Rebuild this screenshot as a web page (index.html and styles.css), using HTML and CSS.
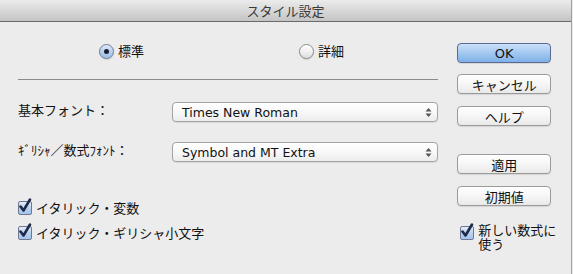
FILE: index.html
```html
<!DOCTYPE html>
<html lang="ja">
<head>
<meta charset="utf-8">
<title>スタイル設定</title>
<link rel="stylesheet" href="styles.css">
</head>
<body>
<div class="window">
  <div class="titlebar">スタイル設定</div>
  <div class="content">
    <div class="left">
      <div class="radios">
        <label class="radio-item r1"><span class="radio on"><span class="dot"></span></span>標準</label>
        <label class="radio-item r2"><span class="radio"></span>詳細</label>
      </div>
      <div class="sep"></div>
      <div class="row row1">
        <span class="label">基本フォント：</span>
        <div class="select"><span>Times New Roman</span>
          <svg class="arrows" width="7" height="11" viewBox="0 0 7 11"><path d="M3.5 1 L6.5 4.5 H0.5 Z M3.5 10 L6.5 6.5 H0.5 Z" fill="#555"/></svg>
        </div>
      </div>
      <div class="row row2">
        <span class="label">ｷﾞﾘｼｬ／数式ﾌｫﾝﾄ：</span>
        <div class="select"><span>Symbol and MT Extra</span>
          <svg class="arrows" width="7" height="11" viewBox="0 0 7 11"><path d="M3.5 1 L6.5 4.5 H0.5 Z M3.5 10 L6.5 6.5 H0.5 Z" fill="#555"/></svg>
        </div>
      </div>
      <label class="check c1"><span class="box"><svg width="18" height="18" viewBox="0 0 18 18"><path d="M3.5 8.5 L6.5 12.5 L13 1.5" fill="none" stroke="#1d2a4a" stroke-width="2.6" stroke-linecap="round" stroke-linejoin="round"/></svg></span>イタリック・変数</label>
      <label class="check c2"><span class="box"><svg width="18" height="18" viewBox="0 0 18 18"><path d="M3.5 8.5 L6.5 12.5 L13 1.5" fill="none" stroke="#1d2a4a" stroke-width="2.6" stroke-linecap="round" stroke-linejoin="round"/></svg></span>イタリック・ギリシャ小文字</label>
    </div>
    <div class="right">
      <button class="btn ok">OK</button>
      <button class="btn b2">キャンセル</button>
      <button class="btn b3">ヘルプ</button>
      <button class="btn b4">適用</button>
      <button class="btn b5">初期値</button>
      <label class="check c3"><span class="box"><svg width="18" height="18" viewBox="0 0 18 18"><path d="M3.5 8.5 L6.5 12.5 L13 1.5" fill="none" stroke="#1d2a4a" stroke-width="2.6" stroke-linecap="round" stroke-linejoin="round"/></svg></span><span class="wrap">新しい数式に使う</span></label>
    </div>
  </div>
</div>
</body>
</html>
```
FILE: styles.css
```css
* { box-sizing: border-box; }
html, body { margin: 0; padding: 0; }
body {
  width: 573px;
  height: 274px;
  background: #ececec;
  font-family: "Noto Sans CJK JP", "DejaVu Sans", sans-serif;
  font-size: 13px;
  color: #111;
  overflow: hidden;
}
.window {
  width: 572px;
  height: 274px;
  border-right: 1px solid #a0a0a0;
  background: #ececec;
}
.titlebar {
  height: 22px;
  line-height: 21px;
  text-align: center;
  font-size: 13px;
  color: #3a3a3a;
  background: linear-gradient(#ececec, #d4d4d4 60%, #c4c4c4);
  border-bottom: 1px solid #6a6a6a;
}
.content {
  display: flex;
}
.left {
  width: 440px;
  padding-left: 18px;
  display: flex;
  flex-direction: column;
}
.radios {
  display: flex;
  margin-top: 21px;
  height: 16px;
  padding-left: 81px;
}
.radio-item {
  display: flex;
  align-items: center;
  gap: 4px;
  line-height: 16px;
}
.r2 { margin-left: 155px; }
.radio {
  width: 15px;
  height: 15px;
  border-radius: 50%;
  border: 1px solid #8c8c8c;
  background: linear-gradient(#ffffff, #f1f1f1 50%, #dedede);
  display: flex;
  align-items: center;
  justify-content: center;
  box-shadow: 0 1px 1px rgba(0,0,0,0.12);
}
.radio.on {
  border-color: #6d7b9a;
  background: linear-gradient(#dfeaf8, #b6d0ef 50%, #9fc2ec);
}
.dot {
  width: 5px;
  height: 5px;
  border-radius: 50%;
  background: #1a1f2e;
}
.sep {
  margin-top: 20px;
  width: 420px;
  height: 1px;
  background: #8a8a8a;
}
.row {
  display: flex;
  align-items: center;
  height: 20px;
}
.row1 { margin-top: 22px; }
.row2 { margin-top: 20px; }
.label {
  width: 154px;
  line-height: 16px;
  margin-top: -4px;
}
.select {
  width: 266px;
  height: 20px;
  border: 1px solid #a3a3a3;
  border-radius: 4px;
  background: linear-gradient(#ffffff, #f8f8f8 50%, #ececec);
  display: flex;
  align-items: center;
  justify-content: space-between;
  padding: 0 5px 0 9px;
  font-family: "DejaVu Sans", sans-serif;
  font-size: 12.5px;
  box-shadow: 0 1px 1px rgba(0,0,0,0.08);
}
.check {
  display: flex;
  align-items: center;
  gap: 4px;
  line-height: 16px;
}
.c1 { margin-top: 38px; }
.c2 { margin-top: 9px; }
.box {
  position: relative;
  width: 14px;
  height: 14px;
  border: 1px solid #6f7890;
  border-radius: 2px;
  background: linear-gradient(#e3edf9, #b9d2ef 50%, #a3c4ec);
  flex: none;
}
.box svg {
  position: absolute;
  left: -2px;
  top: -4px;
}
.right {
  width: 132px;
  display: flex;
  flex-direction: column;
  padding-left: 18px;
}
.btn {
  width: 94px;
  height: 20px;
  border: 1px solid #9b9b9b;
  border-radius: 4px;
  background: linear-gradient(#ffffff, #f6f6f6 50%, #e9e9e9);
  font-family: "Noto Sans CJK JP", "DejaVu Sans", sans-serif;
  font-size: 13px;
  line-height: 17px;
  padding: 0;
  color: #111;
  box-shadow: 0 1px 1px rgba(0,0,0,0.1);
}
.ok {
  margin-top: 21px;
  border-color: #5b6a93;
  background: linear-gradient(#c9e0f8, #a3c8f0 50%, #7fb1e9);
  font-family: "DejaVu Sans", sans-serif;
}
.b2 { margin-top: 11px; }
.b3 { margin-top: 12px; }
.b4 { margin-top: 28px; }
.b5 { margin-top: 12px; }
.c3 {
  margin-top: 17px;
  margin-left: 3px;
  align-items: flex-start;
  line-height: 14px;
}
.c3 .box { margin-top: 3px; }
.wrap {
  width: 80px;
}
```
